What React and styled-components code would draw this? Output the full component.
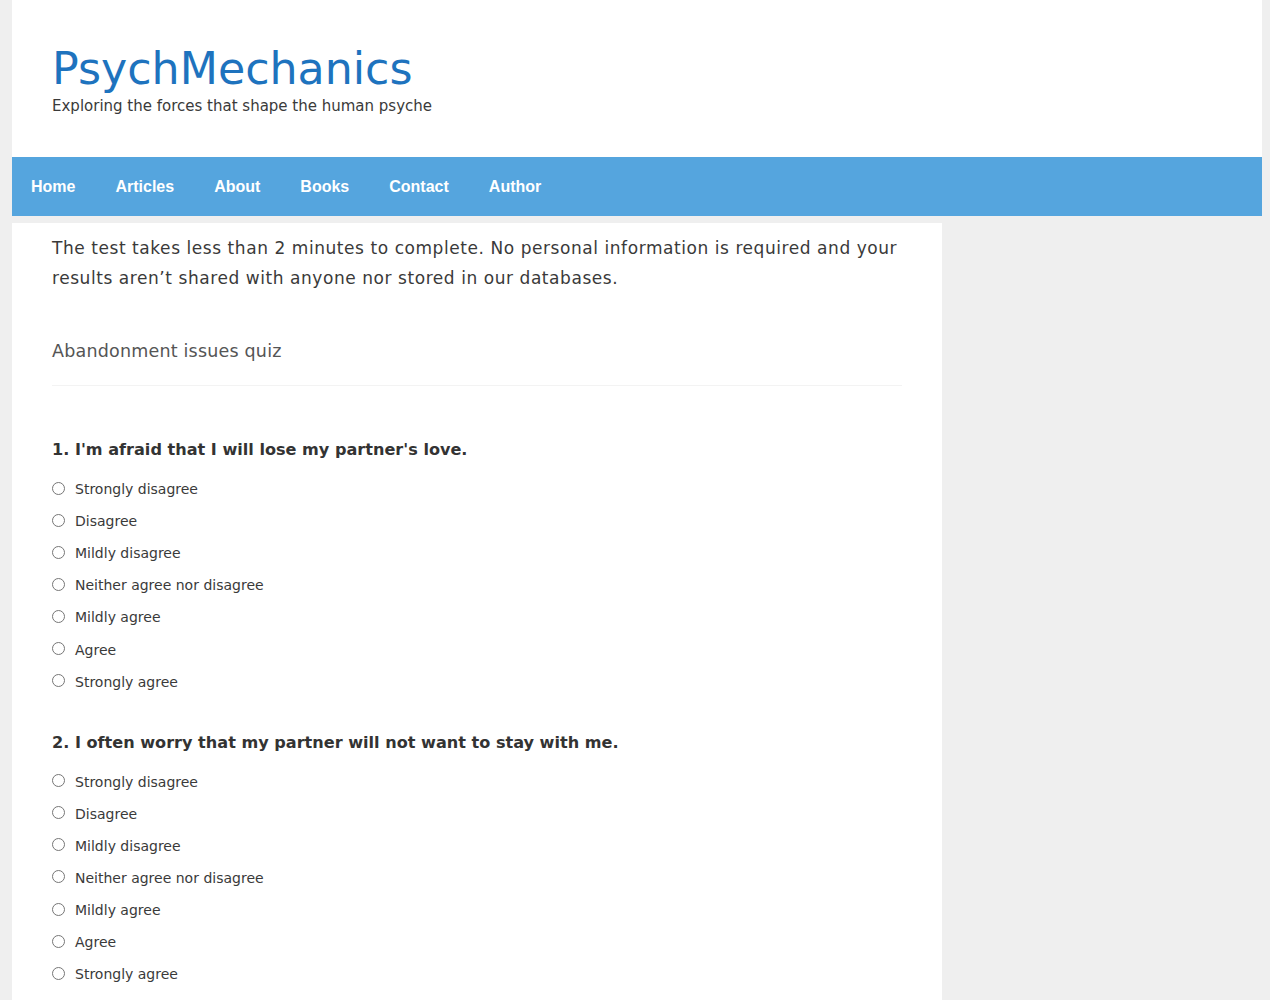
import styled, { createGlobalStyle } from 'styled-components';

const GlobalStyle = createGlobalStyle`
  body {
    margin: 0;
    background: #efefef;
    font-family: "DejaVu Sans", Verdana, sans-serif;
    color: #3a3a3a;
  }
`;

const Site = styled.div`
  width: 1250px;
  margin-left: 12px;
`;

const Header = styled.header`
  background: #fff;
  height: 157px;
  padding: 40px 40px 0;
  box-sizing: border-box;
`;

const Logo = styled.div`
  font-size: 44.3px;
  line-height: 58px;
  color: #1e73be;
`;

const Tagline = styled.div`
  font-size: 15px;
  line-height: 20px;
  color: #3a3a3a;
  margin-top: -2px;
`;

const Nav = styled.nav`
  background: #55a5de;
  height: 59px;
  display: flex;
  align-items: center;
`;

const NavLink = styled.a`
  font-family: "Liberation Sans", Arial, sans-serif;
  font-weight: bold;
  font-size: 16px;
  color: #fff;
  padding: 0 20px;
  text-decoration: none;
  &:first-child {
    margin-left: -1px;
  }
`;

const Main = styled.main`
  width: 930px;
  background: #fff;
  margin-top: 7px;
  padding: 10px 40px 0;
  box-sizing: border-box;
  min-height: 800px;
`;

const Intro = styled.p`
  font-size: 17px;
  line-height: 30px;
  letter-spacing: 0.56px;
  margin: 0;
`;

const QuizTitle = styled.div`
  font-size: 17.5px;
  letter-spacing: 0.2px;
  color: #555;
  margin-top: 48px;
  padding-bottom: 24px;
  border-bottom: 1px solid #f3f3f3;
`;

const Question = styled.div`
  margin-top: ${p => (p.$first ? '54px' : '35px')};
`;

const QuestionText = styled.div`
  font-weight: bold;
  font-size: 16.1px;
  color: #333;
  margin-bottom: 14px;
`;

const Option = styled.label`
  display: flex;
  align-items: center;
  height: 32.1px;
  font-size: 14px;
  color: #3a3a3a;
`;

const Radio = styled.span`
  width: 11px;
  height: 11px;
  border: 1px solid #767676;
  border-radius: 50%;
  margin-right: 10px;
  margin-top: -2px;
`;

const options = [
  'Strongly disagree',
  'Disagree',
  'Mildly disagree',
  'Neither agree nor disagree',
  'Mildly agree',
  'Agree',
  'Strongly agree',
];

const questions = [
  "1. I'm afraid that I will lose my partner's love.",
  '2. I often worry that my partner will not want to stay with me.',
];

export default function App() {
  return (
    <Site>
      <GlobalStyle />
      <Header>
        <Logo>PsychMechanics</Logo>
        <Tagline>Exploring the forces that shape the human psyche</Tagline>
      </Header>
      <Nav>
        {['Home', 'Articles', 'About', 'Books', 'Contact', 'Author'].map(l => (
          <NavLink key={l} href="#">{l}</NavLink>
        ))}
      </Nav>
      <Main>
        <Intro>
          The test takes less than 2 minutes to complete. No personal information is required and your
          results aren’t shared with anyone nor stored in our databases.
        </Intro>
        <QuizTitle>Abandonment issues quiz</QuizTitle>
        {questions.map((q, i) => (
          <Question key={i} $first={i === 0}>
            <QuestionText>{q}</QuestionText>
            {options.map(o => (
              <Option key={o}>
                <Radio />
                {o}
              </Option>
            ))}
          </Question>
        ))}
      </Main>
    </Site>
  );
}
